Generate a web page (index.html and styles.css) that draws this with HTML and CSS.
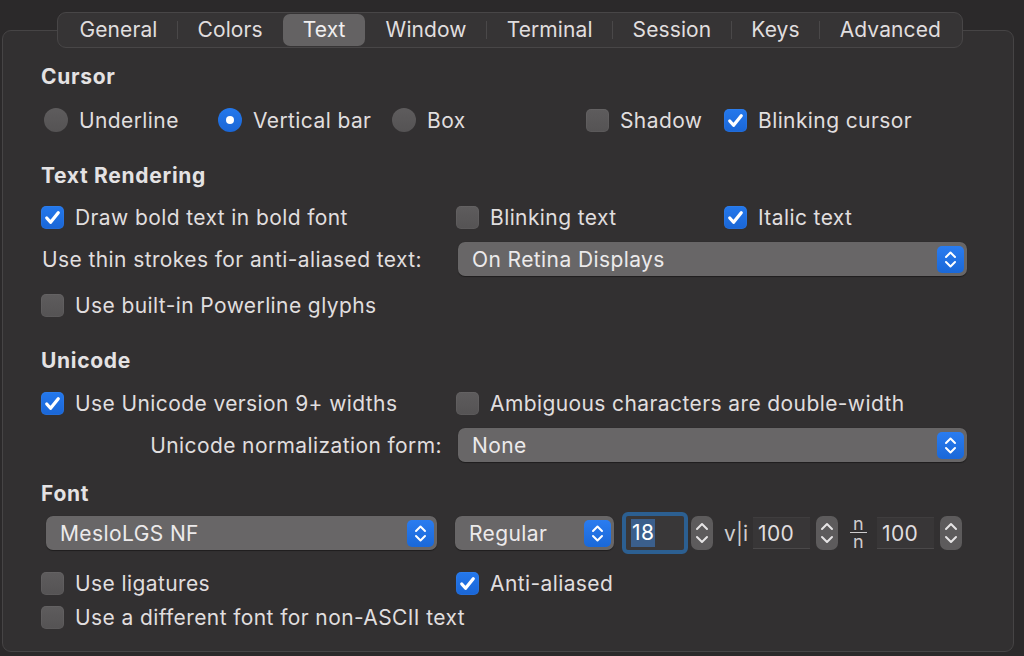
FILE: index.html
```html
<!DOCTYPE html>
<html>
<head>
    <title>Profiles - Text</title>
    <link rel="stylesheet" href="styles.css">
</head>
<body>
    <div class="window">
        <nav class="tabs">
            <span class="tab">General</span><span class="sep"></span>
            <span class="tab">Colors</span><span class="sep off"></span>
            <span class="tab active">Text</span><span class="sep off"></span>
            <span class="tab">Window</span><span class="sep"></span>
            <span class="tab">Terminal</span><span class="sep"></span>
            <span class="tab">Session</span><span class="sep"></span>
            <span class="tab">Keys</span><span class="sep"></span>
            <span class="tab">Advanced</span>
        </nav>

        <section class="panel">
            <h2 class="heading">Cursor</h2>
            <div class="row cursor-row">
                <label class="option radio-opt"><span class="radio"></span>Underline</label>
                <label class="option radio-opt"><span class="radio on"></span>Vertical bar</label>
                <label class="option radio-opt"><span class="radio"></span>Box</label>
                <label class="option"><span class="check"></span>Shadow</label>
                <label class="option"><span class="check on"><svg viewBox="0 0 24 24"><path d="M6 12.5l4 4.5 8-10"/></svg></span>Blinking cursor</label>
            </div>

            <h2 class="heading mt-section">Text Rendering</h2>
            <div class="row mt-12">
                <label class="option"><span class="check on"><svg viewBox="0 0 24 24"><path d="M6 12.5l4 4.5 8-10"/></svg></span>Draw bold text in bold font</label>
                <label class="option"><span class="check"></span>Blinking text</label>
                <label class="option"><span class="check on"><svg viewBox="0 0 24 24"><path d="M6 12.5l4 4.5 8-10"/></svg></span>Italic text</label>
            </div>
            <div class="row select-row mt-8">
                <span class="field-label">Use thin strokes for anti-aliased text:</span>
                <div class="popup wide">
                    <span>On Retina Displays</span>
                    <span class="popup-btn"><svg viewBox="0 0 27 27"><path d="M9 11l4.5-4.5L18 11M9 16l4.5 4.5L18 16"/></svg></span>
                </div>
            </div>
            <div class="row mt-12">
                <label class="option"><span class="check"></span>Use built-in Powerline glyphs</label>
            </div>

            <h2 class="heading mt-section">Unicode</h2>
            <div class="row mt-13">
                <label class="option"><span class="check on"><svg viewBox="0 0 24 24"><path d="M6 12.5l4 4.5 8-10"/></svg></span>Use Unicode version 9+ widths</label>
                <label class="option span-2"><span class="check"></span>Ambiguous characters are double-width</label>
            </div>
            <div class="row select-row mt-8">
                <span class="field-label right">Unicode normalization form:</span>
                <div class="popup wide">
                    <span>None</span>
                    <span class="popup-btn"><svg viewBox="0 0 27 27"><path d="M9 11l4.5-4.5L18 11M9 16l4.5 4.5L18 16"/></svg></span>
                </div>
            </div>

            <h2 class="heading mt-20">Font</h2>
            <div class="font-row">
                <div class="popup family">
                    <span>MesloLGS NF</span>
                    <span class="popup-btn"><svg viewBox="0 0 27 27"><path d="M9 11l4.5-4.5L18 11M9 16l4.5 4.5L18 16"/></svg></span>
                </div>
                <div class="popup weight">
                    <span>Regular</span>
                    <span class="popup-btn"><svg viewBox="0 0 27 27"><path d="M9 11l4.5-4.5L18 11M9 16l4.5 4.5L18 16"/></svg></span>
                </div>
                <div class="size-field"><span class="selected">18</span></div>
                <span class="stepper"><svg viewBox="0 0 22 34"><path d="M6 13l5-5 5 5M6 21l5 5 5-5"/></svg></span>
                <span class="glyph-label">v|i</span>
                <div class="num-field">100</div>
                <span class="stepper"><svg viewBox="0 0 22 34"><path d="M6 13l5-5 5 5M6 21l5 5 5-5"/></svg></span>
                <span class="frac"><span>n</span><span class="bar"></span><span>n</span></span>
                <div class="num-field">100</div>
                <span class="stepper"><svg viewBox="0 0 22 34"><path d="M6 13l5-5 5 5M6 21l5 5 5-5"/></svg></span>
            </div>
            <div class="row mt-12">
                <label class="option"><span class="check"></span>Use ligatures</label>
                <label class="option"><span class="check on"><svg viewBox="0 0 24 24"><path d="M6 12.5l4 4.5 8-10"/></svg></span>Anti-aliased</label>
            </div>
            <div class="row">
                <label class="option span-3"><span class="check"></span>Use a different font for non-ASCII text</label>
            </div>
        </section>
    </div>
</body>
</html>
```

FILE: styles.css
```css
body {
    margin: 0;
    background: #2b292a;
    color: #e0dedf;
    font-family: Inter, "Noto Sans", sans-serif;
    font-size: 21px;
    letter-spacing: 0.4px;
}
.window {
    padding: 12px 10px 0 2px;
}
.tabs {
    position: relative;
    z-index: 1;
    display: flex;
    align-items: center;
    width: fit-content;
    height: 36px;
    box-sizing: border-box;
    margin: 0 0 -18px 55px;
    padding: 0 2px;
    background: #363435;
    border: 1px solid #484647;
    border-radius: 9px;
    letter-spacing: 0.1px;
}
.tab {
    padding: 0 19.5px;
    height: 32px;
    line-height: 32px;
    border-radius: 7px;
}
.tab.active {
    background: #646263;
    color: #f0eff0;
}
.sep {
    width: 1px;
    height: 18px;
    background: #4a4849;
}
.sep.off {
    background: transparent;
}
.panel {
    height: 622px;
    box-sizing: border-box;
    padding: 34px 0 0 38px;
    background: #323031;
    border: 1px solid #464445;
    border-radius: 9px;
}
.heading {
    margin: 0;
    height: 24px;
    line-height: 24px;
    font-size: 21px;
    font-weight: 700;
    letter-spacing: 0.7px;
    color: #e4e2e3;
}
.row {
    display: grid;
    grid-template-columns: 415px 268px auto;
    align-items: center;
    height: 34px;
}
.cursor-row {
    grid-template-columns: 174px 174px 194px 138px auto;
    padding-left: 3px;
    margin-top: 14px;
}
.mt-section { margin-top: 27px; }
.mt-12 { margin-top: 12px; }
.mt-13 { margin-top: 13px; }
.mt-8 { margin-top: 8px; }
.mt-20 { margin-top: 20px; }
.span-2 { grid-column: span 2; }
.span-3 { grid-column: span 3; }

.option {
    display: flex;
    align-items: center;
    gap: 11px;
    white-space: nowrap;
}
.check {
    display: flex;
    align-items: center;
    justify-content: center;
    width: 23px;
    height: 23px;
    box-sizing: border-box;
    border-radius: 5px;
    background: linear-gradient(#5e5c5d, #555354);
    box-shadow: inset 0 0 0 1px rgba(255, 255, 255, 0.04);
}
.check.on {
    background: linear-gradient(#2478ec, #1a66d6);
}
.check svg {
    width: 23px;
    height: 23px;
}
.check path {
    fill: none;
    stroke: #fff;
    stroke-width: 3.4;
    stroke-linecap: round;
    stroke-linejoin: round;
}
.radio {
    display: flex;
    align-items: center;
    justify-content: center;
    width: 24px;
    height: 24px;
    border-radius: 50%;
    background: linear-gradient(#5e5c5d, #555354);
}
.radio.on {
    background: linear-gradient(#2478ec, #1a66d6);
}
.radio.on::after {
    content: "";
    width: 8px;
    height: 8px;
    border-radius: 50%;
    background: #fff;
}

.select-row .field-label {
    padding-left: 1px;
    white-space: nowrap;
}
.select-row .field-label.right {
    text-align: right;
    padding-right: 14px;
}
.popup {
    display: flex;
    align-items: center;
    justify-content: space-between;
    height: 34px;
    box-sizing: border-box;
    padding: 0 3px 0 14px;
    background: #686667;
    border-radius: 7px;
    box-shadow: 0 0.5px 1px rgba(0, 0, 0, 0.4);
    color: #eceaeb;
}
.popup.wide {
    grid-column: span 2;
    width: 509px;
    margin-left: 2px;
}
.popup-btn {
    display: flex;
    width: 27px;
    height: 27px;
    border-radius: 5px;
    background: linear-gradient(#2a7cf0, #1a68d8);
}
.popup-btn svg,
.stepper svg {
    width: 100%;
    height: 100%;
}
.popup-btn path,
.stepper path {
    fill: none;
    stroke: #fff;
    stroke-width: 2;
    stroke-linecap: round;
    stroke-linejoin: round;
}

.font-row {
    display: flex;
    align-items: center;
    height: 42px;
    margin-top: 6px;
    padding-left: 5px;
}
.popup.family {
    width: 391px;
}
.popup.weight {
    width: 159px;
    margin-left: 18px;
}
.size-field {
    display: flex;
    align-items: center;
    width: 66px;
    height: 42px;
    box-sizing: border-box;
    margin-left: 8px;
    padding-left: 5px;
    background: #393738;
    border: 4px solid #2c5f91;
    border-radius: 6px;
}
.size-field .selected {
    background: #3b5f8c;
    color: #fff;
    line-height: 28px;
    padding: 0 1px;
}
.stepper {
    display: flex;
    width: 22px;
    height: 34px;
    margin-left: 3px;
    border-radius: 7px;
    background: #5d5b5c;
}
.stepper path {
    stroke: #e6e4e5;
}
.glyph-label {
    margin-left: 11px;
    width: 20px;
    letter-spacing: 0;
    color: #cfcdce;
}
.num-field {
    width: 57px;
    height: 32px;
    line-height: 32px;
    box-sizing: border-box;
    margin-left: 9px;
    padding-left: 5px;
    background: #383637;
    border-top: 1px solid #3f3d3e;
    border-bottom: 1px solid #4a4849;
}
.num-field + .stepper {
    margin-left: 6px;
}
.frac {
    display: flex;
    flex-direction: column;
    align-items: center;
    width: 17px;
    margin-left: 12px;
    font-size: 18px;
    line-height: 14px;
    color: #cfcdce;
}
.frac .bar {
    width: 17px;
    height: 1.5px;
    margin: 1px 0 2px;
    background: #cfcdce;
}
.frac + .num-field {
    margin-left: 10px;
}
```
